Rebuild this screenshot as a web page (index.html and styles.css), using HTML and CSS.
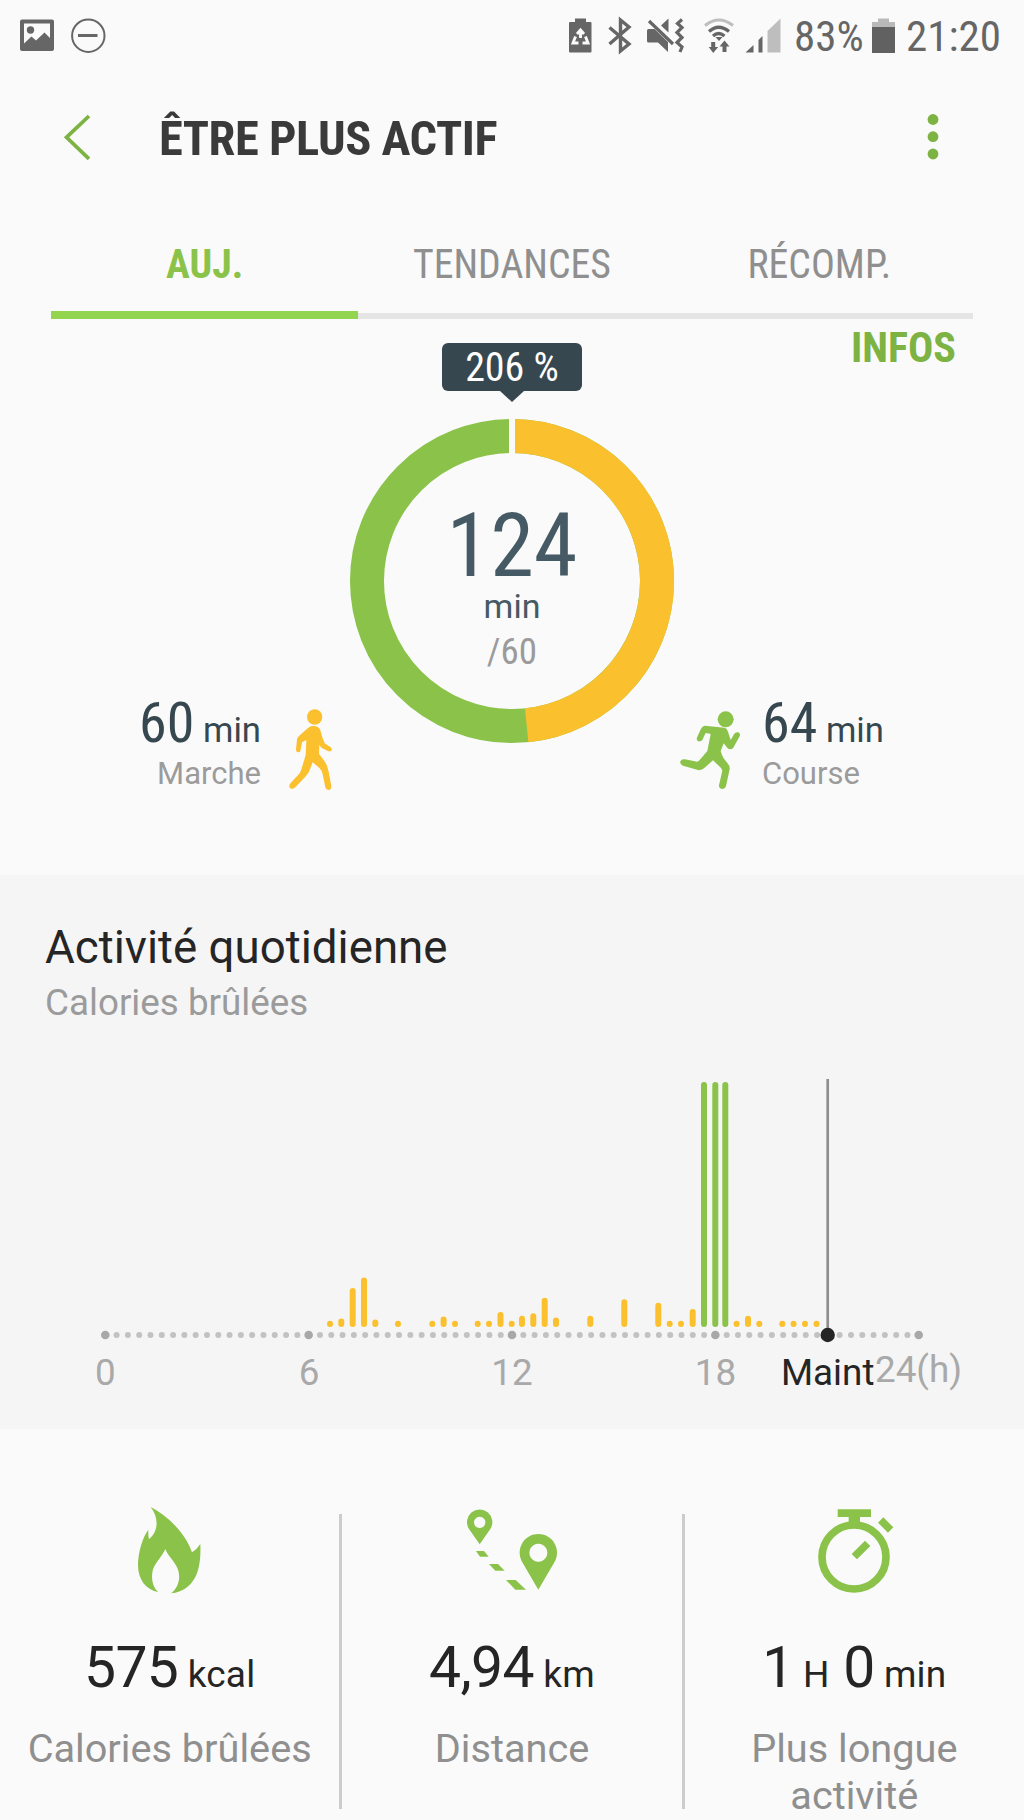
FILE: index.html
```html
<!DOCTYPE html>
<html lang="fr">
<head>
  <meta charset="UTF-8">
  <meta name="viewport" content="width=device-width, initial-scale=1.0">
  <title>Être plus actif</title>
  <link rel="stylesheet" href="styles.css">
</head>
<body>
  <!-- Status bar -->
  <div class="status-bar">
    <svg class="status-left" width="90" height="40" viewBox="18 16 90 40">
      <path fill="#666" fill-rule="evenodd" d="M22 19.500h30a2 2 0 0 1 2 2v27.500a2 2 0 0 1-2 2h-30a2 2 0 0 1-2-2v-27.500a2 2 0 0 1 2-2zM24 23.500v20l7.500-7 4.500 4 8.500-8 5.500 5.500v-14.500z"/>
      <circle cx="30.500" cy="30" r="3.700" fill="#666"/>
      <circle cx="88.300" cy="35.700" r="16.200" fill="none" stroke="#666" stroke-width="2"/>
      <path d="M78 35.500h19.500" stroke="#666" stroke-width="3"/>
    </svg>
    <svg class="status-icons" width="220" height="40" viewBox="565 16 220 40">
      <g fill="#666">
        <path d="M570 22h5v-3.500h11v3.500h4.500a1 1 0 0 1 1 1v28.500a1 1 0 0 1-1 1h-20.500a1 1 0 0 1-1-1v-28.500a1 1 0 0 1 1-1z"/>
        <path d="M647 30.500q0-1.500 1.500-1.500h6l13.500 13v10l-10-9.500h-9.500q-1.500 0-1.500-1.500zM661 25.500l7.500-7v14z"/>
        <path d="M715.500 37h7l-3.500 4zM711.200 42h4v5h3l-5 6-4.500-6h2.500zM722.500 52v-5.500h-3l5-6 5 6h-3v5.500z"/>
        <path d="M745.500 52.500l8-7.500v7.500zM758.500 40l4-4v16.500h-4z"/>
      </g>
      <path fill="#bebebe" d="M767.500 31l13-12.500v34h-13z"/>
      <g fill="none" stroke="#fafafa" stroke-width="2.900">
        <path d="M577 34l3.500-4 3.500 4M575.500 36.500l-2.500 6.500h5.500M585.500 36.500l2.500 6.500h-5.500M580.500 32v6"/>
      </g>
      <g fill="none" stroke="#666">
        <path stroke-width="3.400" d="M609.500 27.500l19.500 16.500-8.500 7v-31l8.500 7-19.500 17"/>
        <path stroke-width="3.200" d="M649 21l24 23"/>
        <path stroke-width="3.200" d="M682 19.500l-4.500 4 4.500 4-5 5 5 5-5 5 5 4.500-2 5"/>
        <path stroke-width="3.200" d="M709 31.500q9.500-8.500 20 0M713 36q5.500-5 11.500 0"/>
        <path stroke="#bebebe" stroke-width="3" d="M705 25.500q14-11 28 0"/>
      </g>
    </svg>
    <span class="status-text battery-text">83%</span>
    <svg class="battery" width="23" height="36" viewBox="0 0 23 36">
      <path fill="#b9b9b9" d="M0 4h6v-3.500h11v3.500h6v5h-23z"/>
      <path fill="#616161" d="M0 9h23v26h-23z"/>
    </svg>
    <span class="status-text clock">21:20</span>
  </div>

  <!-- Header -->
  <header class="app-bar">
    <svg width="30" height="50" viewBox="62 112 30 50">
      <path d="M89 115l-22.500 21.300 22.500 21.500" fill="none" stroke="#7cb342" stroke-width="3.700"/>
    </svg>
    <h1>ÊTRE PLUS ACTIF</h1>
    <svg class="menu" width="12" height="50" viewBox="0 0 12 50">
      <g fill="#7cb342">
        <circle cx="6" cy="6.500" r="5.400"/>
        <circle cx="6" cy="23.700" r="5.400"/>
        <circle cx="6" cy="41" r="5.400"/>
      </g>
    </svg>
  </header>

  <!-- Tabs -->
  <nav class="tabs">
    <a class="tab active">AUJ.</a>
    <a class="tab">TENDANCES</a>
    <a class="tab">RÉCOMP.</a>
  </nav>

  <!-- Goal -->
  <section class="goal">
    <div class="side walk">
      <div class="side-text">
        <p class="time">60<small> min</small></p>
        <p class="kind">Marche</p>
      </div>
      <svg width="47" height="86" viewBox="500 78 141 258">
        <circle cx="583" cy="111" r="23" fill="#fbc02d"/>
        <path fill="#fbc02d" d="M575 138Q592 136 599 148L606 172L613 190L631 202Q638 209 631 214L624 214L603 203L597 194L596 221L612 243Q622 256 625 275L633 318Q633 330 624 330Q617 330 615 322L607 283Q605 272 598 265L577 247L566 275Q562 283 555 290L525 322Q516 330 509 324Q504 317 511 309L538 280Q542 273 545 262L556 225L558 180L545 187L541 209Q540 217 534 217Q527 217 527 208L530 178Q531 172 536 168L562 145Q568 139 575 138z"/>
      </svg>
    </div>
    <div class="progress">
      <div class="tooltip">206 %</div>
      <div class="ring">
        <svg width="324" height="324" viewBox="-162 -162 324 324">
          <g fill="none" stroke-width="34">
            <circle r="145" stroke="#8bc34a"/>
            <path d="M0 -145A145 145 0 0 1 14.670 144.260" stroke="#fbc02d"/>
          </g>
          <path d="M0 -163v36" stroke="#fafafa" stroke-width="6"/>
        </svg>
        <div class="ring-text">
          <p class="total">124</p>
          <p class="unit">min</p>
          <p class="target">/60</p>
        </div>
      </div>
    </div>
    <div class="side run">
      <a class="infos">INFOS</a>
      <div class="run-row">
        <svg width="65" height="84" viewBox="55 84 195 252">
          <circle cx="198" cy="118" r="24" fill="#8bc34a"/>
          <path fill="#8bc34a" d="M135 137L195 143Q202 145 205 155L213 180L223 163Q228 155 236 157Q243 161 240 169L221 203Q213 211 204 205L192 190L183 213Q186 225 192 235L206 253Q211 259 210 268L199 318Q196 327 187 327Q177 325 178 316L188 272Q186 266 182 262L160 241L133 265Q125 272 115 270L70 257Q60 253 62 244Q66 236 76 238L112 245Q116 245 120 240L143 213L153 162L140 159Q138 159 136 163L128 180Q122 187 114 183Q109 178 113 170L124 146Q128 138 135 137z"/>
        </svg>
        <div class="side-text">
          <p class="time">64<small> min</small></p>
          <p class="kind">Course</p>
        </div>
      </div>
    </div>
  </section>

  <!-- Daily activity -->
  <section class="daily">
    <h2>Activité quotidienne</h2>
    <p class="subtitle">Calories brûlées</p>
    <svg class="chart" width="1024" height="404" viewBox="0 1025 1024 404">
      <g fill="none" stroke-linecap="round">
        <path d="M105.300 1335H918.800" stroke="#c2c2c2" stroke-width="6" stroke-dasharray="0 11.298"/>
        <path d="M105.300 1335h814" stroke="#a8a8a8" stroke-width="8.600" stroke-dasharray="0 203.350"/>
        <path stroke="#fbc02d" stroke-width="6" d="M330 1323.700V1324M341.300 1321.500V1324M352.700 1291V1324M364 1280.500V1324M375.300 1322.500V1324M398 1323.700V1324M432.300 1323.700V1324M443.600 1319.500V1324M455 1323.700V1324M477.700 1323.700V1324M489 1323.700V1324M500.500 1315V1324M511.700 1323.700V1324M522 1318.700V1324M533.300 1316.300V1324M544.700 1300.700V1324M556 1320.500V1324M590.300 1318.700V1324M624.300 1302.300V1324M658.300 1305.700V1324M669.700 1323.700V1324M681 1323.700V1324M692.700 1312V1324M736.600 1323.700V1324M748 1318.700V1324M759.300 1323.700V1324M782.300 1323.700V1324M793.600 1323.700V1324M805 1323.700V1324M816.500 1323.700V1324"/>
        <path stroke="#8bc34a" stroke-width="6" d="M704 1085V1324M715.300 1085V1324M725.300 1085V1324"/>
      </g>
      <path d="M827.700 1079v256" stroke="#8e8e8e" stroke-width="2.700"/>
      <circle cx="827.700" cy="1335" r="7.200" fill="#252525"/>
      <g class="hours">
        <text x="105.300" y="1385">0</text>
        <text x="309" y="1385">6</text>
        <text x="512" y="1385">12</text>
        <text x="715.500" y="1385">18</text>
        <text class="now" x="827.700" y="1385">Maint</text>
        <text x="918.500" y="1382">24(h)</text>
      </g>
    </svg>
  </section>

  <!-- Stats -->
  <section class="stats">
    <div class="stat">
      <svg width="90" height="90" viewBox="376 75 270 270">
        <path fill="#8bc34a" d="M453 81C505 108 558 160 577 217Q592 208 602 192C605 260 592 330 515 340C540 320 545 285 530 258C518 236 505 228 497 207C487 230 469 245 460 268C452 300 462 325 476 336C440 330 415 300 415 255C415 215 430 170 446 149Q445 165 448 178C480 150 475 110 453 81z"/>
      </svg>
      <p class="value">575<small> kcal</small></p>
      <p class="label">Calories brûlées</p>
    </div>
    <div class="divider"></div>
    <div class="stat">
      <svg width="94" height="90" viewBox="375 75 282 270">
        <g fill="#8bc34a" fill-rule="evenodd">
          <path d="M419 193l-32-46a38 38 0 1 1 64 0zM419 110a17 17 0 1 0 .1 0z"/>
          <path d="M595 329l-49-84a56 56 0 1 1 98 0zM595 191a27 27 0 1 0 .1 0z"/>
          <path d="M408 213h24l14 17h-26zM447 252h27l20 20h-28zM498 300h29l31 29h-32z"/>
        </g>
      </svg>
      <p class="value">4,94<small> km</small></p>
      <p class="label">Distance</p>
    </div>
    <div class="divider"></div>
    <div class="stat">
      <svg width="90" height="90" viewBox="387 75 270 270">
        <circle cx="522" cy="231" r="96" fill="none" stroke="#8bc34a" stroke-width="23"/>
        <path fill="#8bc34a" d="M473 88h100v23h-33v20h-34v-20h-33zM610 112l30 30-16 16-30-30zM555 182l16 16-40 40-16-16z"/>
      </svg>
      <p class="value">1<small> H</small> 0<small> min</small></p>
      <p class="label">Plus longue activité</p>
    </div>
  </section>
</body>
</html>
```
FILE: styles.css
```css
body {
  font-family: Roboto, sans-serif;
  margin: 0;
  padding: 0;
  width: 1024px;
  height: 1820px;
  overflow: hidden;
  background-color: #fafafa;
  color: #252525;
}
p, h1, h2 {
  margin: 0;
  font-weight: normal;
}
svg {
  display: block;
  flex-shrink: 0;
}
.status-bar,
.app-bar,
.tabs,
.infos,
.tooltip,
.total,
.target,
.time {
  font-family: "Roboto Condensed", Roboto, sans-serif;
  font-stretch: 75%;
}
/* Status bar */
.status-bar {
  display: flex;
  align-items: center;
  height: 72px;
  padding-left: 18px;
  color: #666;
}
.status-icons {
  margin-left: 457px;
}
.status-text {
  font-size: 43px;
  line-height: 72px;
}
.battery-text {
  margin-left: 9px;
  width: 78px;
}
.clock {
  margin-left: 11px;
}
/* Header */
.app-bar {
  display: flex;
  align-items: center;
  height: 132px;
  padding: 0 85px 0 62px;
}
h1 {
  margin-left: 67px;
  font-size: 48.5px;
  font-weight: bold;
  letter-spacing: -0.5px;
  color: #3a3a3a;
}
.menu {
  margin-left: auto;
}
/* Tabs */
.tabs {
  display: flex;
  height: 115px;
  margin: 0 51px;
}
.tab {
  flex: 1;
  box-sizing: border-box;
  padding-top: 38px;
  border-bottom: 6px solid #e5e5e5;
  font-size: 39.8px;
  line-height: 46px;
  text-align: center;
  color: #8f8f8f;
}
.tab.active {
  border-bottom: 8px solid #94d550;
  font-weight: bold;
  color: #8bc34a;
}
/* Goal */
.goal {
  display: grid;
  grid-template-columns: 340px 344px 340px;
  height: 556px;
}
.side {
  display: flex;
  box-sizing: border-box;
  padding-bottom: 83px;
}
.walk {
  align-items: flex-end;
  justify-content: flex-end;
  gap: 26px;
  padding-right: 6px;
  text-align: right;
}
.run {
  flex-direction: column;
  justify-content: space-between;
}
.run-row {
  display: flex;
  align-items: flex-end;
  gap: 19px;
  margin-left: -6px;
}
.infos {
  align-self: flex-end;
  padding: 4px 68px 0 0;
  font-size: 42px;
  font-weight: bold;
  line-height: 50px;
  color: #7cb342;
}
.time {
  font-size: 56px;
  line-height: 66px;
  color: #37474f;
}
.time small {
  font-family: Roboto, sans-serif;
  font-size: 34.7px;
  font-stretch: 100%;
  line-height: 1;
}
.kind {
  font-size: 31px;
  line-height: 36px;
  color: #9b9b9b;
}
.progress {
  display: flex;
  flex-direction: column;
  align-items: center;
  padding-top: 24px;
}
.tooltip {
  position: relative;
  width: 140px;
  height: 48px;
  margin-bottom: 28px;
  border-radius: 6px;
  background-color: #37474f;
  font-size: 40px;
  line-height: 49px;
  text-align: center;
  color: #fff;
}
.tooltip::after {
  content: "";
  position: absolute;
  top: 48px;
  left: 58px;
  border: 12px solid transparent;
  border-top: 11px solid #37474f;
  border-bottom: 0;
}
.ring {
  display: grid;
}
.ring svg,
.ring-text {
  grid-area: 1 / 1;
}
.ring-text {
  padding-top: 83px;
  text-align: center;
  color: #455a64;
}
.total {
  font-size: 88.5px;
  line-height: 88px;
}
.unit {
  font-size: 34px;
  line-height: 32px;
}
.target {
  margin-top: 9px;
  font-size: 37px;
  line-height: 42px;
  color: #9b9b9b;
}
/* Daily activity */
.daily {
  height: 507px;
  padding-top: 47px;
  background-color: #f5f5f5;
}
h2 {
  margin-left: 45px;
  font-size: 45.700px;
  line-height: 52px;
}
.subtitle {
  margin: 7px 0 0 45px;
  font-size: 36.8px;
  line-height: 44px;
  color: #9b9b9b;
}
.hours {
  font-size: 36.8px;
  text-anchor: middle;
  fill: #a9a9a9;
}
.hours .now {
  fill: #252525;
}
/* Stats */
.stats {
  display: flex;
}
.stat {
  display: flex;
  flex: 1;
  flex-direction: column;
  align-items: center;
  padding-top: 76px;
}
.value {
  margin-top: 39px;
  font-size: 57px;
  line-height: 68px;
  letter-spacing: -0.6px;
}
.value small {
  font-size: 37px;
  line-height: 1;
  letter-spacing: 0.2px;
}
.label {
  width: 290px;
  margin-top: 23px;
  font-size: 39.7px;
  line-height: 47px;
  text-align: center;
  color: #8f8f8f;
}
.divider {
  width: 3px;
  height: 295px;
  margin-top: 85px;
  background-color: #ccc;
}
```
